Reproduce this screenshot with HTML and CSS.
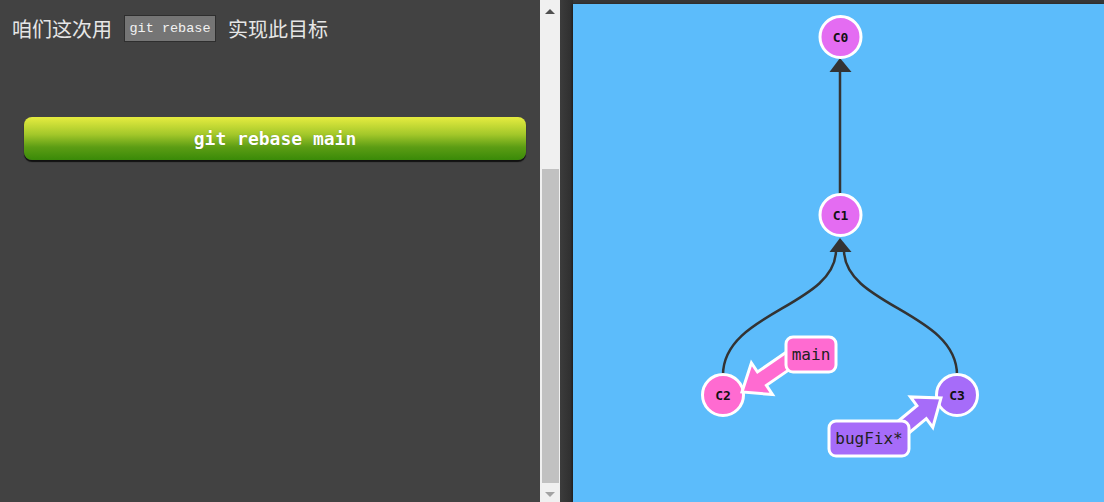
FILE: index.html
```html
<!DOCTYPE html>
<html lang="zh">
<head>
<meta charset="utf-8">
<link rel="stylesheet" href="styles.css">
</head>
<body>
<div class="app">
  <div class="left">
    <div class="goal">
      <span class="cjk">咱们这次用</span>
      <code class="cmd">git rebase</code>
      <span class="cjk">实现此目标</span>
    </div>
    <div class="btn">git rebase main</div>
  </div>
  <div class="scrollbar">
    <div class="sb-arrow sb-up"></div>
    <div class="sb-track"><div class="sb-thumb"></div></div>
    <div class="sb-arrow sb-down"></div>
  </div>
  <div class="gutter"></div>
  <div class="canvas-wrap">
    <div class="canvas">
      <svg class="graph" viewBox="573 4 531 498" width="531" height="498">
        <g class="edges" fill="none" stroke="#333" stroke-width="2.5">
          <line x1="840" y1="196" x2="840" y2="71"/>
          <path d="M723 375 C723 312, 836 306, 836 250"/>
          <path d="M957 375 C957 312, 844 306, 844 250"/>
        </g>
        <polygon points="840,58 829.5,72 851.5,72" fill="#333"/>
        <polygon points="840,238 829.5,252 851.5,252" fill="#333"/>

        <g class="node">
          <circle cx="840.5" cy="37" r="20.5" fill="#e46cf2"/>
          <text x="840.5" y="41.5">C0</text>
        </g>
        <g class="node">
          <circle cx="840.5" cy="215" r="20.5" fill="#e46cf2"/>
          <text x="840.5" y="219.5">C1</text>
        </g>
        <g class="node">
          <circle cx="723" cy="395" r="20.5" fill="#ff6bd1"/>
          <text x="723" y="399.5">C2</text>
        </g>
        <g class="node">
          <circle cx="957" cy="395" r="20.5" fill="#a66cf9"/>
          <text x="957" y="399.5">C3</text>
        </g>

        <polygon class="ref-arrow" fill="#ff6bd1" points="787.6,351.3 757.5,372.0 751.4,362.9 742,392 772.5,394.5 766.4,385.3 796.4,364.7"/>
        <rect class="ref" x="786" y="337" width="50" height="35" rx="7" fill="#ff6bd1"/>
        <text class="ref-text" x="811" y="360">main</text>

        <polygon class="ref-arrow" fill="#a66cf9" points="895.3,423.5 916.9,405.7 910.4,396.9 941,398 932.8,427.5 926.3,418.7 904.7,436.5"/>
        <rect class="ref" x="829" y="421" width="80" height="35" rx="7" fill="#a66cf9"/>
        <text class="ref-text" x="869" y="444">bugFix*</text>
      </svg>
    </div>
  </div>
</div>
</body>
</html>
```

FILE: styles.css
```css
html, body {
  margin: 0;
  padding: 0;
  background: #424242;
}

.app {
  display: flex;
  width: 1104px;
  height: 502px;
  overflow: hidden;
}

.left {
  width: 540px;
  flex: none;
  background: #424242;
  box-sizing: border-box;
  padding: 15px 14px 0 12px;
}

.goal {
  display: flex;
  align-items: center;
  gap: 12px;
  height: 27px;
}

.cjk {
  font-family: "Noto Sans CJK SC", sans-serif;
  font-size: 20px;
  color: #e6e6e6;
  line-height: 27px;
}

.cmd {
  display: block;
  box-sizing: border-box;
  width: 92px;
  height: 27px;
  line-height: 25px;
  text-align: center;
  background: #757575;
  border: 1px solid #2e2e2e;
  color: #f2f2f2;
  font-family: "Liberation Mono", monospace;
  font-size: 13.5px;
}

.btn {
  margin: 75px 0 0 12px;
  height: 43px;
  border-radius: 8px;
  background: linear-gradient(#e6ec40 0%, #a4c82a 40%, #5c9d14 70%, #3a8a08 100%);
  box-shadow: 0 2px 1px #111;
  color: #fff;
  font-family: "DejaVu Sans Mono", monospace;
  font-weight: bold;
  font-size: 18px;
  line-height: 43px;
  text-align: center;
  text-shadow: 0 0 1px rgba(0,0,0,0.3);
}

.scrollbar {
  width: 20px;
  flex: none;
  background: #f0f0f0;
  display: flex;
  flex-direction: column;
  align-items: center;
}

.sb-arrow {
  height: 17px;
  width: 100%;
  display: flex;
  align-items: center;
  justify-content: center;
  flex: none;
}

.sb-up::before {
  content: "";
  border-left: 5px solid transparent;
  border-right: 5px solid transparent;
  border-bottom: 5px solid #505050;
  margin-top: 6px;
}

.sb-down::before {
  content: "";
  border-left: 5px solid transparent;
  border-right: 5px solid transparent;
  border-top: 5px solid #a3a3a3;
  margin-top: 2px;
}

.sb-track {
  flex: 1;
  width: 100%;
  display: flex;
  flex-direction: column;
  justify-content: flex-end;
  align-items: center;
  padding-bottom: 2px;
  box-sizing: border-box;
}

.sb-thumb {
  width: 17px;
  height: 314px;
  background: #c1c1c1;
}

.gutter {
  width: 13px;
  flex: none;
  background: linear-gradient(90deg, #3c3c3c, #333 60%, #2e2e2e);
}

.canvas-wrap {
  flex: 1;
  background: #363636;
  padding-top: 4px;
  display: flex;
}

.canvas {
  flex: 1;
  background: #5cbcfb;
  position: relative;
  box-shadow: -1px 0 2px rgba(0,0,0,0.4);
}

.graph {
  display: block;
}

.node circle {
  stroke: #fff;
  stroke-width: 3;
}

.node text {
  font-family: "DejaVu Sans Mono", monospace;
  font-weight: bold;
  font-size: 13px;
  fill: #111;
  text-anchor: middle;
}

.ref-arrow {
  stroke: #fff;
  stroke-width: 3;
  stroke-linejoin: miter;
}

.ref {
  stroke: #fff;
  stroke-width: 3;
}

.ref-text {
  font-family: "DejaVu Sans Mono", monospace;
  font-size: 16px;
  fill: #222;
  text-anchor: middle;
}
```
